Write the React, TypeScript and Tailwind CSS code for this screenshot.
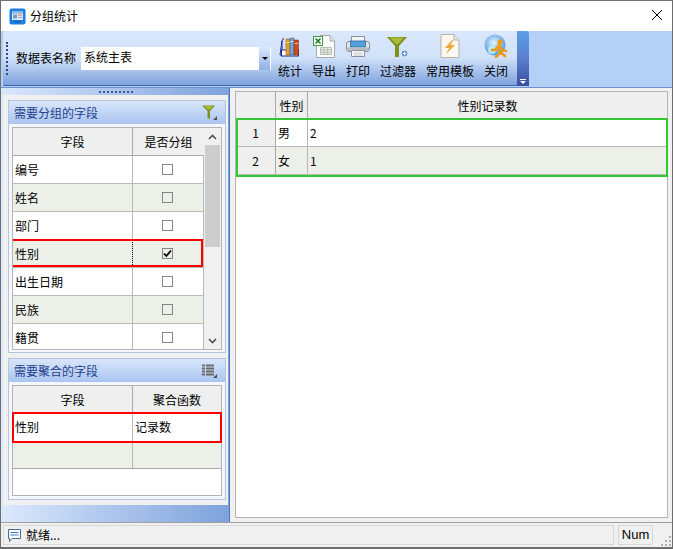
const font = '"Noto Sans CJK SC", "Liberation Sans", sans-serif';

function AppIcon() {
  return (
    <svg width="17" height="17" viewBox="0 0 17 17">
      <rect x="0.5" y="0.5" width="16" height="16" rx="2" fill="#1a7fe0" />
      <rect x="3" y="3.5" width="11" height="8.5" fill="#dfe9f5" />
      <rect x="3" y="3.5" width="11" height="2" fill="#8fb3dc" />
      <rect x="4" y="6.5" width="4" height="4" fill="#7f9cc0" />
      <rect x="9" y="6.5" width="4" height="1" fill="#e0685a" />
      <rect x="9" y="9" width="4" height="1" fill="#8fa6c4" />
      <rect x="6" y="13" width="5" height="1.5" fill="#0f5cb0" />
    </svg>
  );
}

function BooksIcon() {
  return (
    <svg width="22" height="22" viewBox="0 0 22 22">
      <path d="M1 19 L3 5 L3 19 Z" fill="#fff" stroke="#1c2a8c" />
      <rect x="2.5" y="14" width="17" height="6" fill="#fff" stroke="#1c2a8c" />
      <path d="M4.5 2 L2.5 6" stroke="#1c2a8c" />
      <rect x="7" y="3" width="4" height="16" fill="#e8a030" stroke="#7a4a10" strokeWidth="0.5" />
      <rect x="11" y="2" width="4" height="17" fill="#70a8d8" stroke="#2c5a90" strokeWidth="0.5" />
      <rect x="15" y="4" width="4.5" height="15" fill="#d04a20" stroke="#7a2410" strokeWidth="0.5" />
      <rect x="7.5" y="6" width="3" height="1" fill="#f8e0a0" />
      <rect x="11.5" y="5" width="3" height="1" fill="#e0f0ff" />
      <rect x="15.5" y="7" width="3.5" height="1" fill="#f8c0a0" />
    </svg>
  );
}

function ExcelIcon() {
  return (
    <svg width="22" height="23" viewBox="0 0 22 23">
      <path d="M3.5 3.5 V22.5 H21.5 V6 L17 0.5 H7" fill="#fdfdfd" stroke="#a8a8a8" />
      <path d="M17 0.5 V6 H21.5" fill="#e4e4e4" stroke="#a8a8a8" />
      <path d="M7.5 12.5 H18.5 V19.5 H7.5 Z M7.5 14.8 H18.5 M7.5 17.2 H18.5 M11 12.5 V19.5 M14.7 12.5 V19.5" fill="#eef1ea" stroke="#b8bcb0" />
      <rect x="0.5" y="1.5" width="9" height="9" fill="#fff" stroke="#3f9a3c" />
      <path d="M2.5 3.5 L7.5 8.5 M7.5 3.5 L2.5 8.5" stroke="#1f7a28" strokeWidth="1.6" />
    </svg>
  );
}

function PrinterIcon() {
  return (
    <svg width="24" height="23" viewBox="0 0 24 23">
      <path d="M5.5 8 V1.5 H18.5 V8" fill="#f2f4f8" stroke="#8a9099" />
      <rect x="0.5" y="6.5" width="23" height="10" rx="2.5" fill="#e4e7ea" stroke="#8a9099" />
      <rect x="4.5" y="6" width="15" height="6" fill="#53a0dc" stroke="#38699c" strokeWidth="0.8" />
      <rect x="1" y="12.5" width="22" height="3.5" fill="#b9bdc2" />
      <path d="M5.5 15.5 H18.5 V21.5 H5.5 Z" fill="#fafafa" stroke="#8a9099" />
      <path d="M7.5 18 H16.5 M7.5 20 H16.5" stroke="#c0c4c8" />
    </svg>
  );
}

function FunnelIcon() {
  return (
    <svg width="22" height="22" viewBox="0 0 22 22">
      <path d="M0 1 H20 L12 10 V21 H8 V10 Z" fill="#80901c" />
      <path d="M2.5 1.5 H17 L11 8 H9 Z" fill="#a8ba3a" />
      <circle cx="17.5" cy="17.5" r="3.5" fill="#5a88c8" stroke="#e4eefb" />
      <path d="M15.5 17.5 H19.5 M17.5 15.5 V19.5" stroke="#fff" />
    </svg>
  );
}

function SmallFunnelIcon() {
  return (
    <svg width="15" height="15" viewBox="0 0 15 15">
      <path d="M0 0.5 H13 L8 6 V13.5 H5.5 V6 Z" fill="#80901c" />
      <path d="M2 1 H11 L7.5 4.5 H6 Z" fill="#a8ba3a" />
      <path d="M15 11 V15 H11 Z" fill="#505050" />
    </svg>
  );
}

function TemplateIcon() {
  return (
    <svg width="20" height="24" viewBox="0 0 20 24">
      <path d="M1 0.5 H14 L19 6 V23.5 H1 Z" fill="#fbf8f2" stroke="#b8b4aa" />
      <path d="M14 0.5 V6 H19" fill="#e8e4dc" stroke="#b8b4aa" />
      <path d="M12 6 L5 14 H9 L6 20 L15 11 H10.5 L13.5 6 Z" fill="#f2a93c" />
    </svg>
  );
}

function CloseManIcon() {
  return (
    <svg width="24" height="24" viewBox="0 0 24 24">
      <defs>
        <radialGradient id="globe" cx="0.45" cy="0.4" r="0.6">
          <stop offset="0" stopColor="#e4f4ff" />
          <stop offset="1" stopColor="#4f97dc" />
        </radialGradient>
      </defs>
      <circle cx="11" cy="11" r="10.5" fill="url(#globe)" />
      <circle cx="8" cy="16" r="4" fill="#b8f0ee" opacity="0.9" />
      <circle cx="16" cy="8" r="2.6" fill="#ee9a1c" />
      <path d="M15 11 L11 16 L8 16 M15 11 L18 16 L22 17 M14 15 L16 19 L12 23 M16 18 L21 22" stroke="#ee9a1c" strokeWidth="2.6" fill="none" strokeLinecap="round" />
    </svg>
  );
}

function ToolButton({ label, children }: { label: string; children: React.ReactNode }) {
  return (
    <div className="flex flex-col items-center">
      <div className="h-[24px] flex items-end justify-center w-full">{children}</div>
      <div className="mt-[4px] text-[12px] leading-[18px] whitespace-nowrap">{label}</div>
    </div>
  );
}

function Checkbox({ checked }: { checked?: boolean }) {
  return (
    <div className="w-[11px] h-[11px] border border-[#858585] flex items-center justify-center">
      {checked && (
        <svg width="9" height="9" viewBox="0 0 9 9">
          <path d="M1 4.5 L3.3 7 L8 1.5" stroke="#000" strokeWidth="1.8" fill="none" />
        </svg>
      )}
    </div>
  );
}

const fields = ["编号", "姓名", "部门", "性别", "出生日期", "民族", "籍贯"];

function GroupHeader({ title, children }: { title: string; children: React.ReactNode }) {
  return (
    <div className="h-[23px] flex items-center justify-between pl-[5px] pr-[8px] bg-gradient-to-b from-[#d9e6fa] to-[#a9c5f0] text-[12px] text-[#1f3f8c]">
      <span>{title}</span>
      {children}
    </div>
  );
}

function GroupGrid() {
  return (
    <div className="mx-[3px] mt-[3px] h-[223px] border border-[#b4b4b4] bg-white flex overflow-hidden">
      <div className="w-[191px] shrink-0">
        <div className="flex h-[28px] bg-[#efefef] border-b border-[#a8a8a8]">
          <div className="w-[120px] border-r border-[#a8a8a8] flex items-center justify-center">字段</div>
          <div className="flex-1 flex items-center justify-center">是否分组</div>
        </div>
        {fields.map((f, i) => (
          <div
            key={f}
            className={`relative flex h-[28px] border-b border-[#b8b8b8] ${i % 2 === 1 || f === "性别" ? "bg-[#ecf0e9]" : "bg-white"}`}
          >
            <div className={`w-[120px] border-r flex items-center pl-[2px] ${f === "性别" ? "border-dotted border-black" : "border-[#b8b8b8]"}`}>{f}</div>
            <div className="flex-1 flex items-center justify-center border-r border-[#b8b8b8] pr-[1px]">
              <Checkbox checked={f === "性别"} />
            </div>
            {f === "性别" && (
              <div className="absolute left-[-2px] top-[-1px] w-[192px] h-[28px] border-[2px] border-[#ff0000]" />
            )}
          </div>
        ))}
      </div>
      <div className="flex-1 bg-[#f0f0f0] flex flex-col items-center relative">
        <svg className="mt-[6px]" width="9" height="6" viewBox="0 0 9 6">
          <path d="M1 5 L4.5 1.5 L8 5" stroke="#505050" strokeWidth="1.6" fill="none" />
        </svg>
        <div className="mt-[5px] w-[15px] h-[102px] bg-[#cdcdcd]" />
        <svg className="absolute bottom-[5px]" width="9" height="6" viewBox="0 0 9 6">
          <path d="M1 1 L4.5 4.5 L8 1" stroke="#505050" strokeWidth="1.6" fill="none" />
        </svg>
      </div>
    </div>
  );
}

function AggGrid() {
  return (
    <div className="mx-[3px] mt-[3px] h-[111px] border border-[#b4b4b4] bg-white">
      <div className="flex h-[27px] bg-[#efefef]">
        <div className="w-[120px] border-r border-[#a8a8a8] flex items-center justify-center">字段</div>
        <div className="flex-1 flex items-center justify-center">聚合函数</div>
      </div>
      <div className="relative flex h-[28px] bg-white">
        <div className="w-[120px] border-r border-[#b8b8b8] flex items-center pl-[2px]">性别</div>
        <div className="flex-1 flex items-center pl-[2px]">记录数</div>
        <div className="absolute left-[-1px] top-[-1px] right-[-1px] bottom-[-2px] border-[2px] border-[#ff0000]" />
      </div>
      <div className="flex h-[28px] bg-[#ecf0e9] border-b border-[#a8a8a8]">
        <div className="w-[120px] border-r border-[#b8b8b8]" />
      </div>
    </div>
  );
}

function ResultGrid() {
  const rows = [
    ["1", "男", "2"],
    ["2", "女", "1"],
  ];
  return (
    <div className="flex-1 border border-[#b4b4b4] bg-white">
      <div className="flex h-[27px] bg-[#efefef]">
        <div className="w-[40px] border-r border-[#a8a8a8]" />
        <div className="w-[32px] border-r border-[#a8a8a8] flex items-center justify-center">性别</div>
        <div className="flex-1 flex items-center justify-center">性别记录数</div>
      </div>
      <div className="relative">
        {rows.map((r, i) => (
          <div key={r[0]} className={`flex h-[28px] border-b border-[#b8b8b8] ${i === 1 ? "bg-[#ecf0e9]" : "bg-white"}`}>
            <div className="w-[40px] bg-[#efefef] border-r border-[#a8a8a8] flex items-center justify-center">{r[0]}</div>
            <div className="w-[32px] border-r border-[#b8b8b8] flex items-center pl-[2px]">{r[1]}</div>
            <div className="flex-1 flex items-center pl-[2px]">{r[2]}</div>
          </div>
        ))}
        <div className="absolute left-0 right-[-1px] top-[-1px] h-[59px] border-[2px] border-[#32c832]" />
      </div>
    </div>
  );
}

const gripDots = ["col-start-3", "col-start-2", "col-start-3", "col-start-1", "col-start-2", "col-start-3"];

export default function App() {
  return (
    <div
      className="w-[673px] h-[549px] border border-[#6e6e6e] border-b-[2px] bg-[#f0f0f0] flex flex-col text-[12px] text-black overflow-hidden"
      style={{ fontFamily: font }}
    >
      {/* Title */}
      <div className="h-[30px] shrink-0 bg-white flex items-center pl-[8px] relative">
        <AppIcon />
        <span className="ml-[4px] text-[12px]">分组统计</span>
        <svg className="absolute right-[9px] top-[8px]" width="12" height="12" viewBox="0 0 12 12">
          <path d="M1 1 L11 11 M11 1 L1 11" stroke="#000" strokeWidth="1" />
        </svg>
      </div>

      {/* Toolbar band */}
      <div className="h-[56px] shrink-0 bg-[#b5d0f7] flex pl-[2px]">
        <div className="w-[514px] h-[55px] rounded-tl-[3px] border-b border-[#3d66b0] bg-gradient-to-b from-[#dbe8fc] via-[#d0e1f9] to-[#7ea2dc] flex items-center">
          <div className="ml-[3px] h-[33px] w-[2px] border-l-[2px] border-dotted border-[#2c4c8c]" />
          <span className="ml-[8px]">数据表名称</span>
          <div className="ml-[5px] w-[190px] h-[23px] bg-white flex">
            <span className="flex-1 pl-[3px] leading-[19px]">系统主表</span>
            <div className="w-[11px] mr-[1px] h-full bg-gradient-to-b from-[#dbe8fc] to-[#8eb0e4] flex items-center justify-center">
              <div className="w-0 h-0 border-l-[3px] border-r-[3px] border-t-[3px] border-l-transparent border-r-transparent border-t-black" />
            </div>
          </div>
          <div className="ml-[7px] flex gap-[10px] pb-[3px]">
            <ToolButton label="统计"><BooksIcon /></ToolButton>
            <ToolButton label="导出"><ExcelIcon /></ToolButton>
            <ToolButton label="打印"><PrinterIcon /></ToolButton>
            <ToolButton label="过滤器"><FunnelIcon /></ToolButton>
            <ToolButton label="常用模板"><TemplateIcon /></ToolButton>
            <ToolButton label="关闭"><CloseManIcon /></ToolButton>
          </div>
        </div>
        <div className="w-[12px] h-[55px] rounded-tr-[3px] bg-gradient-to-b from-[#5a9fe8] via-[#5a7fcc] to-[#3a4ea0] flex flex-col items-center justify-end pb-[2px]">
          <div className="w-[6px] h-[1px] bg-white mb-[1px]" />
          <div className="w-0 h-0 border-l-[3px] border-r-[3px] border-t-[3px] border-l-transparent border-r-transparent border-t-white" />
        </div>
      </div>

      {/* Body */}
      <div className="flex-1 flex min-h-0 border-t border-[#6f93d2]">
        <div className="w-[229px] shrink-0 flex flex-col pl-[2px] bg-gradient-to-r from-[#dbe8fc] to-[#7ea2dc] border-r border-[#4a76c0]">
          <div className="h-[7px] flex items-center justify-center">
            <div className="w-[34px] border-t-[2px] border-dotted border-[#3a5a9c]" />
          </div>
          <div className="w-[225px] h-[410px] bg-[#f0f0f0] pl-[5px] pr-[2px] pt-[5px]">
            <div className="border border-[#b3c4de] bg-[#f4f8fe] h-[253px]">
              <GroupHeader title="需要分组的字段">
                <SmallFunnelIcon />
              </GroupHeader>
              <GroupGrid />
            </div>
            <div className="mt-[5px] border border-[#b3c4de] bg-[#f4f8fe] h-[142px]">
              <GroupHeader title="需要聚合的字段">
                <svg width="15" height="14" viewBox="0 0 15 14">
                  <path d="M0 1.5 H3 M4 1.5 H12 M0 4.5 H3 M4 4.5 H12 M0 7.5 H3 M4 7.5 H12 M0 10.5 H3 M4 10.5 H12" stroke="#6a6a6a" strokeWidth="2" />
                  <path d="M15 10 V14 H11 Z" fill="#505050" />
                </svg>
              </GroupHeader>
              <AggGrid />
            </div>
          </div>
          <div className="flex-1 bg-gradient-to-r from-[#dbe8fc] to-[#7ea2dc]" />
        </div>
        <div className="flex-1 flex flex-col pl-[5px] pr-[4px] pt-[3px] pb-[4px] bg-[#f0f0f0]">
          <ResultGrid />
        </div>
      </div>

      {/* Status bar */}
      <div className="h-[25px] shrink-0 bg-[#f0f0f0] border-t border-[#a0a0a0] flex items-center pl-[2px] relative">
        <div className="w-[611px] h-[20px] border border-[#d8d8d8] flex items-center pl-[3px]">
          <svg width="15" height="15" viewBox="0 0 15 15">
            <path d="M1.5 1.5 H13.5 V10.5 H5 L2.5 13.5 V10.5 H1.5 Z" fill="#fff" stroke="#4a6a94" />
            <path d="M3.5 4.5 H11.5 M3.5 7 H11.5" stroke="#3a7ac8" />
          </svg>
          <span className="ml-[4px]">就绪...</span>
        </div>
        <div className="ml-[4px] w-[35px] h-[20px] border border-[#d8d8d8] flex items-center justify-center text-[13px]" style={{ fontFamily: '"Liberation Sans", sans-serif' }}>
          Num
        </div>
        <div className="absolute right-[1px] bottom-[1px] grid grid-cols-3 gap-[2px]">
          {gripDots.map((c, i) => (
            <div key={i} className={`${c} w-[2px] h-[2px] bg-[#b0b0b0]`} />
          ))}
        </div>
      </div>
    </div>
  );
}
